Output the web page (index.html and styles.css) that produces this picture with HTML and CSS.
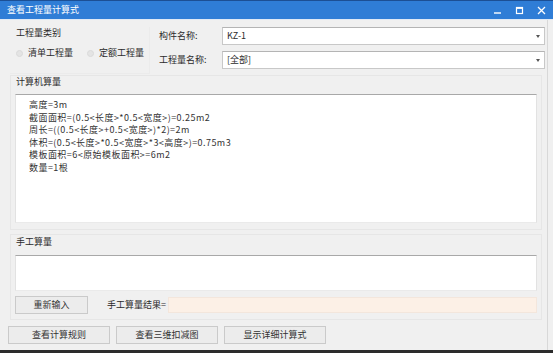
FILE: index.html
```html
<!DOCTYPE html>
<html lang="zh-CN">
<head>
    <meta charset="UTF-8">
    <title>查看工程量计算式</title>
    <link rel="stylesheet" href="styles.css">
</head>
<body>
    <div class="window">
        <div class="titlebar">
            <span class="title">查看工程量计算式</span>
            <div class="controls">
                <svg width="9" height="9" viewBox="0 0 9 9"><path d="M1 7h7" stroke="#fff" stroke-width="1.4"/></svg>
                <svg width="9" height="9" viewBox="0 0 9 9"><rect x="1.5" y="1.5" width="6" height="6" fill="none" stroke="#fff" stroke-width="1.2"/><path d="M1.5 2.2h6" stroke="#fff" stroke-width="1.4"/></svg>
                <svg width="9" height="9" viewBox="0 0 9 9"><path d="M1 1l7 7M8 1l-7 7" stroke="#fff" stroke-width="1.3"/></svg>
            </div>
        </div>

        <div class="content">
            <!-- 工程量类别 + 名称 -->
            <div class="top">
                <div class="type-group">
                    <div class="group-title">工程量类别</div>
                    <div class="radios">
                        <span class="radio"><i class="dot"></i>清单工程量</span>
                        <span class="radio"><i class="dot"></i>定额工程量</span>
                    </div>
                </div>
                <div class="fields">
                    <div class="field">
                        <label>构件名称:</label>
                        <div class="combo">KZ-1<span class="arrow"></span></div>
                    </div>
                    <div class="field">
                        <label>工程量名称:</label>
                        <div class="combo">[全部]<span class="arrow"></span></div>
                    </div>
                </div>
            </div>

            <!-- 计算机算量 -->
            <div class="section computed">
                <div class="section-title">计算机算量</div>
                <div class="textbox formula">
                    <div>高度=3m</div>
                    <div>截面面积=(0.5&lt;长度&gt;*0.5&lt;宽度&gt;)=0.25m2</div>
                    <div>周长=((0.5&lt;长度&gt;+0.5&lt;宽度&gt;)*2)=2m</div>
                    <div>体积=(0.5&lt;长度&gt;*0.5&lt;宽度&gt;*3&lt;高度&gt;)=0.75m3</div>
                    <div>模板面积=6&lt;原始模板面积&gt;=6m2</div>
                    <div>数量=1根</div>
                </div>
            </div>

            <!-- 手工算量 -->
            <div class="section manual">
                <div class="section-title">手工算量</div>
                <div class="textbox manual-input"></div>
                <div class="manual-row">
                    <button class="btn small">重新输入</button>
                    <span class="result-label">手工算量结果=</span>
                    <div class="result"></div>
                </div>
            </div>

            <div class="actions">
                <button class="btn">查看计算规则</button>
                <button class="btn">查看三维扣减图</button>
                <button class="btn">显示详细计算式</button>
            </div>
        </div>
        <div class="bottom-edge"></div>
    </div>
</body>
</html>
```

FILE: styles.css
```css
* {
    box-sizing: border-box;
    margin: 0;
    padding: 0;
}

body {
    font-family: "Noto Sans CJK SC", "Noto Sans", sans-serif;
    font-size: 9px;
    color: #2b2b2b;
    background: #f0f0f0;
}

.window {
    width: 553px;
    height: 353px;
    background: #f0f0f0;
    overflow: hidden;
}

.titlebar {
    height: 20px;
    background: #2f7dd6;
    border-top: 1px solid #1c4f94;
    border-bottom: 1px solid #dfe9f5;
    display: flex;
    align-items: center;
    padding-left: 7px;
    padding-right: 7px;
}

.title {
    color: #fff;
    line-height: 12px;
}

.controls {
    margin-left: auto;
    display: flex;
    gap: 13px;
}

.controls svg {
    display: block;
}

.content {
    width: 548px;
    height: 330px;
    border-right: 1px solid #d8d8d8;
}

/* top part */
.top {
    display: flex;
    height: 55px;
    padding-top: 7px;
}

.type-group {
    width: 140px;
    margin-left: 10px;
    height: 47px;
    border-right: 1px solid #ebebeb;
    border-bottom: 1px solid #ebebeb;
    padding-left: 6px;
}

.group-title {
    line-height: 12px;
}

.radios {
    display: flex;
    gap: 14px;
    margin-top: 8px;
    line-height: 12px;
}

.radio {
    display: flex;
    align-items: center;
    gap: 5px;
}

.dot {
    width: 7px;
    height: 7px;
    border-radius: 50%;
    background: #e4e4e4;
    border: 1px solid #dadada;
    display: block;
}

.fields {
    margin-left: 9px;
    display: flex;
    flex-direction: column;
    gap: 6px;
}

.field {
    display: flex;
    align-items: center;
    height: 18px;
}

.field label {
    width: 63px;
    line-height: 12px;
}

.combo {
    position: relative;
    width: 323px;
    height: 18px;
    background: #fff;
    border: 1px solid #c8c8c8;
    border-top-color: #b4b4b4;
    line-height: 16px;
    padding-left: 4px;
}

.arrow {
    position: absolute;
    right: 4px;
    top: 7px;
    border-left: 2px solid transparent;
    border-right: 2px solid transparent;
    border-top: 3px solid #555;
}

/* sections */
.section {
    margin-left: 10px;
    margin-right: 5px;
    border: 1px solid #e6e6e6;
    padding: 0 4px;
}

.section-title {
    line-height: 12px;
    padding-left: 1px;
}

.textbox {
    background: #fff;
    border-top: 1px solid #a8a8a8;
    border-left: 1px solid #e2e2e2;
    border-right: 1px solid #e2e2e2;
    border-bottom: 1px solid #eaeaea;
}

.computed {
    height: 155px;
    padding-bottom: 6px;
}

.computed .section-title {
    margin-bottom: 6px;
}

.formula {
    height: 129px;
    padding: 4px 0 0 13px;
    line-height: 12.6px;
    letter-spacing: 0.45px;
    color: #333;
}

.manual {
    margin-top: 4px;
    height: 86px;
    padding-top: 1px;
}

.manual .section-title {
    margin-bottom: 7px;
}

.manual-input {
    height: 36px;
}

.manual-row {
    display: flex;
    align-items: center;
    margin-top: 5px;
    height: 18px;
}

.btn {
    font-family: inherit;
    font-size: 9px;
    color: #333;
    height: 18px;
    background: #ececec;
    border: 1px solid #cacaca;
    line-height: 16px;
    cursor: pointer;
}

.btn.small {
    width: 73px;
}

.result-label {
    margin-left: 19px;
    line-height: 12px;
}

.result {
    flex: 1;
    height: 16px;
    margin-left: 2px;
    background: #fcf0e6;
    border: 1px solid #f3e6dc;
}

.actions {
    display: flex;
    gap: 6px;
    margin-top: 6px;
    padding-left: 8px;
}

.actions .btn {
    width: 102px;
}

.bottom-edge {
    height: 3px;
    background: #2c2c2c;
}
```
